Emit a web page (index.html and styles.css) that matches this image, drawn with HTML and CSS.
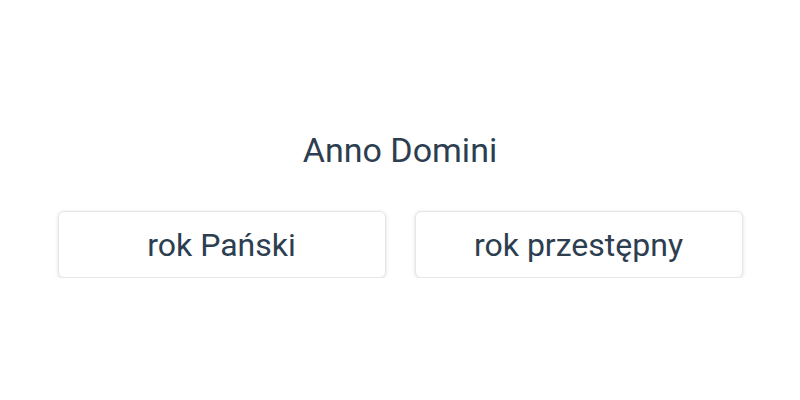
FILE: index.html
```html
<!DOCTYPE html>
<html lang="pl">
<head>
    <meta charset="UTF-8">
    <meta name="viewport" content="width=device-width, initial-scale=1.0">
    <title>Anno Domini</title>
    <link rel="stylesheet" href="styles.css">
</head>
<body>
    <div class="quiz">
        <h2 class="question">Anno Domini</h2>
        <div class="answers">
            <button class="answer">rok Pański</button>
            <button class="answer">rok przestępny</button>
        </div>
    </div>
</body>
</html>
```

FILE: styles.css
```css
body {
    margin: 0;
    font-family: Roboto, "Liberation Sans", sans-serif;
    color: #2c3e50;
    background: #fff;
}

.quiz {
    display: flex;
    flex-direction: column;
    align-items: center;
    padding-top: 130px;
}

.question {
    margin: 0 0 41px;
    font-size: 34px;
    font-weight: 400;
    line-height: 40px;
}

.answers {
    display: flex;
    gap: 29px;
    width: 685px;
}

.answer {
    flex: 1;
    height: 67px;
    background: #fff;
    border: 1px solid #e6e6e6;
    border-radius: 6px;
    box-shadow: 0 1px 4px rgba(0, 0, 0, 0.12);
    font-family: inherit;
    font-size: 32px;
    color: #2c3e50;
    cursor: pointer;
}
```
